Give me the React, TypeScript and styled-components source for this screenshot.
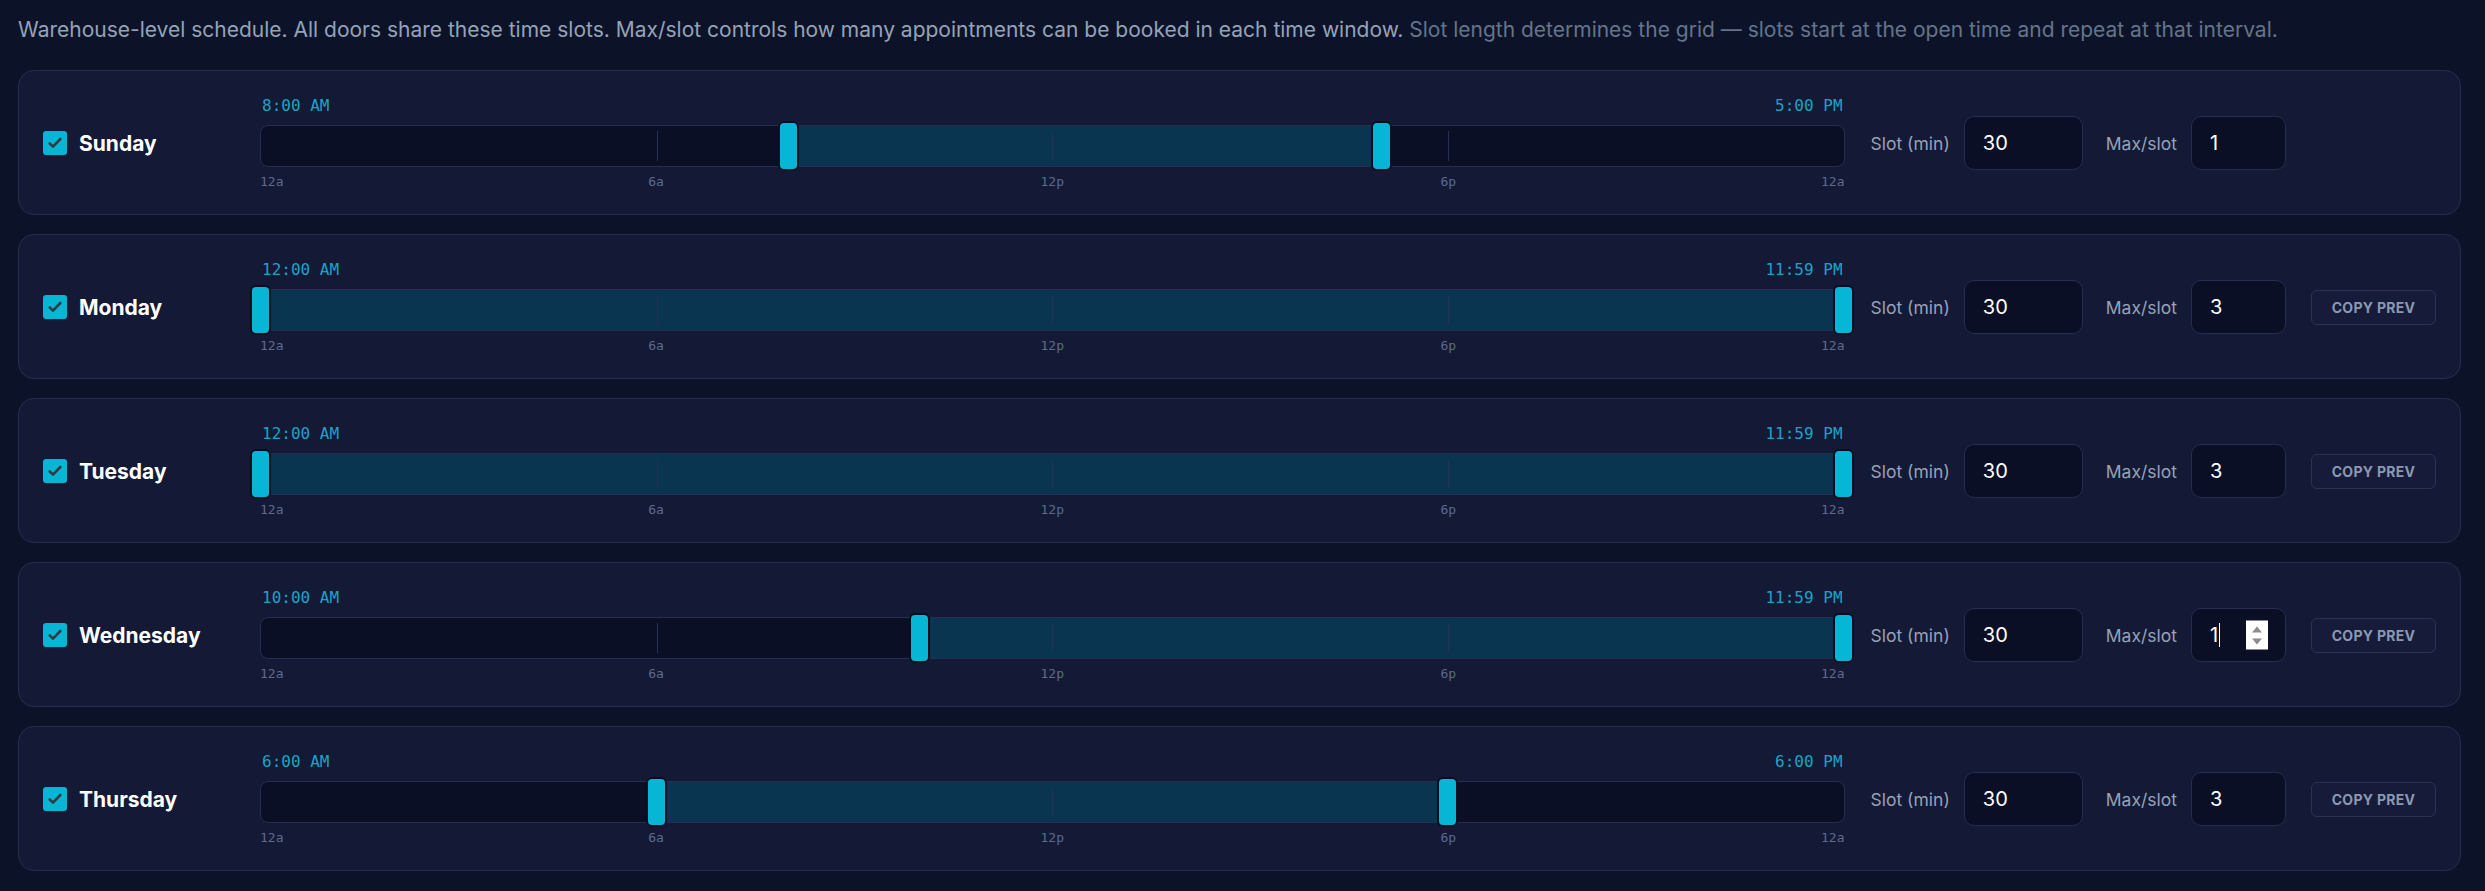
import React from 'react';
import styled, {createGlobalStyle} from 'styled-components';

const PAGE_BG = '#0c1329';
const CARD_BG = '#141935';
const FIELD_BG = '#0b0f26';
const LINE = '#262d50';
const CYAN = '#06b6d4';
const MUTED = '#94a3b8';

type Day = {
    name: string;
    open: number; // minutes from midnight
    close: number;
    slot: number;
    max: number;
    copy: boolean;
    focused?: boolean;
};

const DAYS: Day[] = [
    {name: 'Sunday', open: 480, close: 1020, slot: 30, max: 1, copy: false},
    {name: 'Monday', open: 0, close: 1439, slot: 30, max: 3, copy: true},
    {name: 'Tuesday', open: 0, close: 1439, slot: 30, max: 3, copy: true},
    {name: 'Wednesday', open: 600, close: 1439, slot: 30, max: 1, copy: true, focused: true},
    {name: 'Thursday', open: 360, close: 1080, slot: 30, max: 3, copy: true},
];

const TICKS = [
    {label: '12a', at: 0},
    {label: '6a', at: 25},
    {label: '12p', at: 50},
    {label: '6p', at: 75},
    {label: '12a', at: 100},
];

const formatTime = (mins: number) => {
    const h = Math.floor(mins / 60);
    const m = mins % 60;
    const hour = h % 12 === 0 ? 12 : h % 12;
    return `${hour}:${String(m).padStart(2, '0')} ${h < 12 ? 'AM' : 'PM'}`;
};

const pct = (mins: number) => (mins / 1440) * 100;

export default function App() {
    return (
        <>
            <GlobalStyle/>
            <Page>
                <Intro>
                    Warehouse-level schedule. All doors share these time slots. Max/slot controls how many appointments can be booked in each time window.{' '}
                    <Dim>Slot length determines the grid — slots start at the open time and repeat at that interval.</Dim>
                </Intro>
                <DayList>
                    {DAYS.map(day => (
                        <DayRow key={day.name} day={day}/>
                    ))}
                </DayList>
            </Page>
        </>
    );
}

function DayRow({day}: {day: Day}) {
    const start = pct(day.open);
    const end = pct(day.close + 1 >= 1440 ? 1440 : day.close);

    return (
        <Card>
            <DayToggle>
                <CheckBox>
                    <svg width="16" height="16" viewBox="0 0 24 24">
                        <path d="M4 12.5l5 5L20 6" fill="none" stroke="#333a44" strokeWidth="4" strokeLinecap="round" strokeLinejoin="round"/>
                    </svg>
                </CheckBox>
                <DayName>{day.name}</DayName>
            </DayToggle>

            <Slider>
                <TimeRow>
                    <span>{formatTime(day.open)}</span>
                    <span>{formatTime(day.close)}</span>
                </TimeRow>
                <Track>
                    <Fill style={{left: `${start}%`, width: `${end - start}%`}}/>
                    {[25, 50, 75].map(at => (
                        <TickLine key={at} style={{left: `${at}%`}}/>
                    ))}
                    <Handle style={{left: `${start}%`}}/>
                    <Handle style={{left: `${end}%`}}/>
                </Track>
                <TickRow>
                    {TICKS.map((t, i) => (
                        <TickLabel key={i} $edge={t.at === 0 ? 'start' : t.at === 100 ? 'end' : 'mid'} style={{left: `${t.at}%`}}>
                            {t.label}
                        </TickLabel>
                    ))}
                </TickRow>
            </Slider>

            <Controls>
                <Field>
                    <FieldLabel>Slot (min)</FieldLabel>
                    <NumberBox $width={119}>{day.slot}</NumberBox>
                </Field>
                <Field>
                    <FieldLabel>Max/slot</FieldLabel>
                    <NumberBox $width={95}>
                        {day.max}
                        {day.focused && <Caret/>}
                        {day.focused && (
                            <Spinner>
                                <svg width="14" height="24" viewBox="0 0 14 24">
                                    <path d="M7 3l5 6H2z" fill="#8c8c8c"/>
                                    <path d="M7 21l5-6H2z" fill="#8c8c8c"/>
                                </svg>
                            </Spinner>
                        )}
                    </NumberBox>
                </Field>
                <CopyButton $hidden={!day.copy}>Copy prev</CopyButton>
            </Controls>
        </Card>
    );
}

const GlobalStyle = createGlobalStyle`
    body {
        margin: 0;
        background: ${PAGE_BG};
        font-family: Inter, "Noto Sans", sans-serif;
    }
`

const Page = styled.div`
    padding: 16px 24px 16px 18px;
`

const Intro = styled.p`
    margin: 0 0 26px;
    font-size: 21px;
    line-height: 28px;
    color: ${MUTED};
`

const Dim = styled.span`
    color: #64748b;
`

const DayList = styled.div`
    display: flex;
    flex-direction: column;
    gap: 19px;
`

const Card = styled.div`
    display: flex;
    align-items: center;
    padding: 25px 24px 24px 24px;
    background: ${CARD_BG};
    border: 1px solid ${LINE};
    border-radius: 16px;
`

const DayToggle = styled.div`
    display: flex;
    align-items: center;
    gap: 12px;
    width: 201px;
    flex-shrink: 0;
`

const CheckBox = styled.span`
    display: flex;
    align-items: center;
    justify-content: center;
    width: 24px;
    height: 24px;
    border-radius: 3px;
    background: ${CYAN};
`

const DayName = styled.span`
    font-size: 21px;
    font-weight: 700;
    color: #ffffff;
`

const Slider = styled.div`
    flex: 1;
    margin-left: 16px;
`

const TimeRow = styled.div`
    display: flex;
    justify-content: space-between;
    height: 20px;
    margin-bottom: 9px;
    padding: 0 2px;
    font-family: "DejaVu Sans Mono", monospace;
    font-size: 16px;
    line-height: 20px;
    color: #1ba3c6;
`

const Track = styled.div`
    position: relative;
    height: 42px;
    box-sizing: border-box;
    border: 1px solid ${LINE};
    border-radius: 8px;
    background: ${FIELD_BG};
`

const Fill = styled.div`
    position: absolute;
    top: 0;
    bottom: 0;
    background: #0a3550;
`

const TickLine = styled.div`
    position: absolute;
    top: 5px;
    bottom: 5px;
    width: 1px;
    background: #262f58;
`

const Handle = styled.div`
    position: absolute;
    top: -5px;
    width: 17px;
    height: 46px;
    margin-left: -11px;
    border: 2.5px solid #0a0e22;
    border-radius: 6px;
    background: ${CYAN};
`

const TickRow = styled.div`
    position: relative;
    height: 16px;
    margin-top: 7px;
`

const TickLabel = styled.span<{$edge: 'start' | 'mid' | 'end'}>`
    position: absolute;
    top: 0;
    transform: translateX(${p => (p.$edge === 'start' ? '0' : p.$edge === 'end' ? '-100%' : '-50%')});
    font-family: "DejaVu Sans Mono", monospace;
    font-size: 13px;
    line-height: 16px;
    color: #5e6a8a;
`

const Controls = styled.div`
    display: flex;
    align-items: center;
    gap: 23px;
    margin-left: 26px;
`

const Field = styled.div`
    display: flex;
    align-items: center;
    gap: 14px;
`

const FieldLabel = styled.span`
    font-size: 17.5px;
    color: ${MUTED};
`

const NumberBox = styled.div<{$width: number}>`
    position: relative;
    display: flex;
    align-items: center;
    width: ${p => p.$width}px;
    height: 54px;
    box-sizing: border-box;
    padding-left: 18px;
    border: 1px solid ${LINE};
    border-radius: 10px;
    background: ${FIELD_BG};
    font-size: 20px;
    color: #ffffff;
`

const Caret = styled.span`
    width: 1px;
    height: 24px;
    margin-left: 1px;
    background: #ffffff;
`

const Spinner = styled.span`
    position: absolute;
    right: 17px;
    top: 50%;
    transform: translateY(-50%);
    display: flex;
    align-items: center;
    justify-content: center;
    width: 22px;
    height: 29px;
    background: #ffffff;
`

const CopyButton = styled.button<{$hidden: boolean}>`
    visibility: ${p => (p.$hidden ? 'hidden' : 'visible')};
    width: 125px;
    height: 35px;
    margin-left: 2px;
    padding: 0;
    border: 1px solid #2a3354;
    border-radius: 6px;
    background: #151b38;
    font-family: Inter, sans-serif;
    font-size: 14px;
    font-weight: 700;
    letter-spacing: 0.3px;
    text-transform: uppercase;
    color: #8a98b4;
    cursor: pointer;
`
